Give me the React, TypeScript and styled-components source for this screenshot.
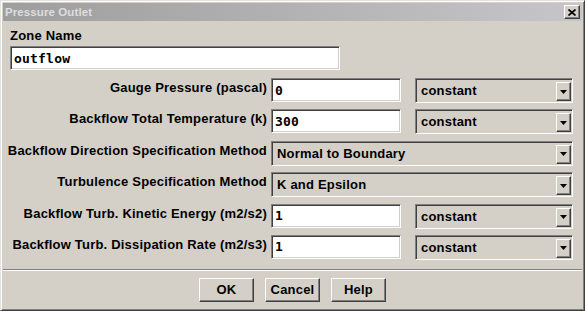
import React from 'react';
import styled, { createGlobalStyle } from 'styled-components';

const GlobalStyle = createGlobalStyle`
  html, body {
    margin: 0;
    padding: 0;
    background: #d4d0c8;
    overflow: hidden;
  }
  #root {
    width: 585px;
    height: 311px;
  }
`;

const Window = styled.div`
  box-sizing: border-box;
  width: 585px;
  height: 311px;
  background: #d4d0c8;
  border: 1px solid;
  border-color: #e4e2dc #404040 #404040 #e4e2dc;
  box-shadow: inset 1px 1px #ffffff, inset -1px -1px #808080;
  padding: 2px;
  display: flex;
  flex-direction: column;
  font-family: "Liberation Sans", Arial, sans-serif;
  color: #000;
`;

const TitleBar = styled.div`
  height: 18px;
  flex: none;
  display: flex;
  align-items: center;
  justify-content: space-between;
  padding: 0 2px 0 2px;
  background: linear-gradient(to right, #9e9e9e, #c6c6ca);
`;

const Title = styled.span`
  font-size: 11.5px;
  font-weight: bold;
  letter-spacing: 0.1px;
  color: #dedede;
  white-space: nowrap;
`;

const CloseButton = styled.button`
  box-sizing: border-box;
  width: 16px;
  height: 14px;
  padding: 0;
  margin: 0;
  display: flex;
  align-items: center;
  justify-content: center;
  background: #d4d0c8;
  border: 1px solid;
  border-color: #ffffff #404040 #404040 #ffffff;
  box-shadow: inset -1px -1px #808080;
`;

const Body = styled.div`
  padding: 7px 0 0 7px;
  display: flex;
  flex-direction: column;
`;

const ZoneLabel = styled.label`
  font-size: 13px;
  line-height: 15px;
  font-weight: bold;
  letter-spacing: 0.2px;
`;

const TextField = styled.input<{ $width: number }>`
  box-sizing: border-box;
  width: ${(p) => p.$width}px;
  height: 24px;
  margin: 0;
  padding: 0 0 0 1px;
  background: #ffffff;
  border: 1px solid;
  border-color: #808080 #ffffff #ffffff #808080;
  box-shadow: inset 1px 1px #404040, inset -1px -1px #d4d0c8;
  font-family: "DejaVu Sans Mono", "Liberation Mono", monospace;
  font-weight: bold;
  font-size: 13px;
  letter-spacing: 0.2px;
  color: #000;
  outline: none;
  text-indent: 2px;
`;

const ZoneField = styled(TextField)`
  margin-top: 3px;
`;

const FormGrid = styled.div`
  margin-top: 8px;
  display: grid;
  grid-template-columns: 257px 302px;
  grid-auto-rows: 25px;
  column-gap: 4px;
  row-gap: 6.4px;
`;

const RowLabel = styled.label`
  display: flex;
  align-items: center;
  justify-content: flex-end;
  padding-bottom: 6px;
  font-size: 13px;
  line-height: 15px;
  font-weight: bold;
  letter-spacing: 0.2px;
  white-space: nowrap;
`;

const FieldPair = styled.div`
  display: flex;
  align-items: flex-start;
  gap: 14px;
`;

const Dropdown = styled.div<{ $width: number }>`
  box-sizing: border-box;
  width: ${(p) => p.$width}px;
  height: 25px;
  display: flex;
  align-items: stretch;
  background: #d4d0c8;
  border: 1px solid;
  border-color: #808080 #ffffff #ffffff #808080;
  box-shadow: inset 1px 1px #404040, inset -1px -1px #d4d0c8;
  padding: 1px;
`;

const DropdownText = styled.span`
  flex: 1;
  display: flex;
  align-items: center;
  padding-left: 4px;
  font-size: 13px;
  font-weight: bold;
  letter-spacing: 0.2px;
  white-space: nowrap;
`;

const ArrowButton = styled.span`
  box-sizing: border-box;
  width: 15px;
  margin-top: 2px;
  display: flex;
  align-items: center;
  justify-content: center;
  background: #d4d0c8;
  border: 1px solid;
  border-color: #ffffff #404040 #404040 #ffffff;
  box-shadow: inset -1px -1px #808080;
`;

const Separator = styled.div`
  margin-top: 9px;
  height: 0;
  border-top: 1px solid #808080;
  border-bottom: 1px solid #ffffff;
`;

const ButtonRow = styled.div`
  padding-top: 7px;
  display: flex;
  justify-content: center;
  gap: 11px;
`;

const PushButton = styled.button`
  box-sizing: border-box;
  width: 55px;
  height: 24px;
  margin: 0;
  padding: 0;
  background: #d4d0c8;
  border: 1px solid;
  border-color: #ffffff #404040 #404040 #ffffff;
  box-shadow: inset -1px -1px #808080;
  font-family: "Liberation Sans", Arial, sans-serif;
  font-size: 13px;
  font-weight: bold;
  letter-spacing: 0.2px;
  color: #000;
`;

type Row =
  | { label: string; kind: 'value'; value: string; option: string }
  | { label: string; kind: 'method'; option: string };

const rows: Row[] = [
  { label: 'Gauge Pressure (pascal)', kind: 'value', value: '0', option: 'constant' },
  { label: 'Backflow Total Temperature (k)', kind: 'value', value: '300', option: 'constant' },
  { label: 'Backflow Direction Specification Method', kind: 'method', option: 'Normal to Boundary' },
  { label: 'Turbulence Specification Method', kind: 'method', option: 'K and Epsilon' },
  { label: 'Backflow Turb. Kinetic Energy (m2/s2)', kind: 'value', value: '1', option: 'constant' },
  { label: 'Backflow Turb. Dissipation Rate (m2/s3)', kind: 'value', value: '1', option: 'constant' },
];

const Arrow = () => (
  <svg width="7" height="4" viewBox="0 0 7 4">
    <polygon points="0,0 7,0 3.5,4" fill="#000" />
  </svg>
);

const CloseIcon = () => (
  <svg width="8" height="7" viewBox="0 0 8 7">
    <path d="M0.5 0.5 L7.5 6.5 M7.5 0.5 L0.5 6.5" stroke="#000" strokeWidth="1.7" fill="none" />
  </svg>
);

const Combo = ({ text, width }: { text: string; width: number }) => (
  <Dropdown $width={width}>
    <DropdownText>{text}</DropdownText>
    <ArrowButton>
      <Arrow />
    </ArrowButton>
  </Dropdown>
);

export default function App() {
  return (
    <>
      <GlobalStyle />
      <Window>
        <TitleBar>
          <Title>Pressure Outlet</Title>
          <CloseButton aria-label="Close">
            <CloseIcon />
          </CloseButton>
        </TitleBar>
        <Body>
          <ZoneLabel>Zone Name</ZoneLabel>
          <ZoneField $width={330} defaultValue="outflow" />
          <FormGrid>
            {rows.map((row) => (
              <React.Fragment key={row.label}>
                <RowLabel>{row.label}</RowLabel>
                {row.kind === 'value' ? (
                  <FieldPair>
                    <TextField $width={130} defaultValue={row.value} />
                    <Combo text={row.option} width={158} />
                  </FieldPair>
                ) : (
                  <Combo text={row.option} width={302} />
                )}
              </React.Fragment>
            ))}
          </FormGrid>
        </Body>
        <Separator />
        <ButtonRow>
          <PushButton>OK</PushButton>
          <PushButton>Cancel</PushButton>
          <PushButton>Help</PushButton>
        </ButtonRow>
      </Window>
    </>
  );
}
